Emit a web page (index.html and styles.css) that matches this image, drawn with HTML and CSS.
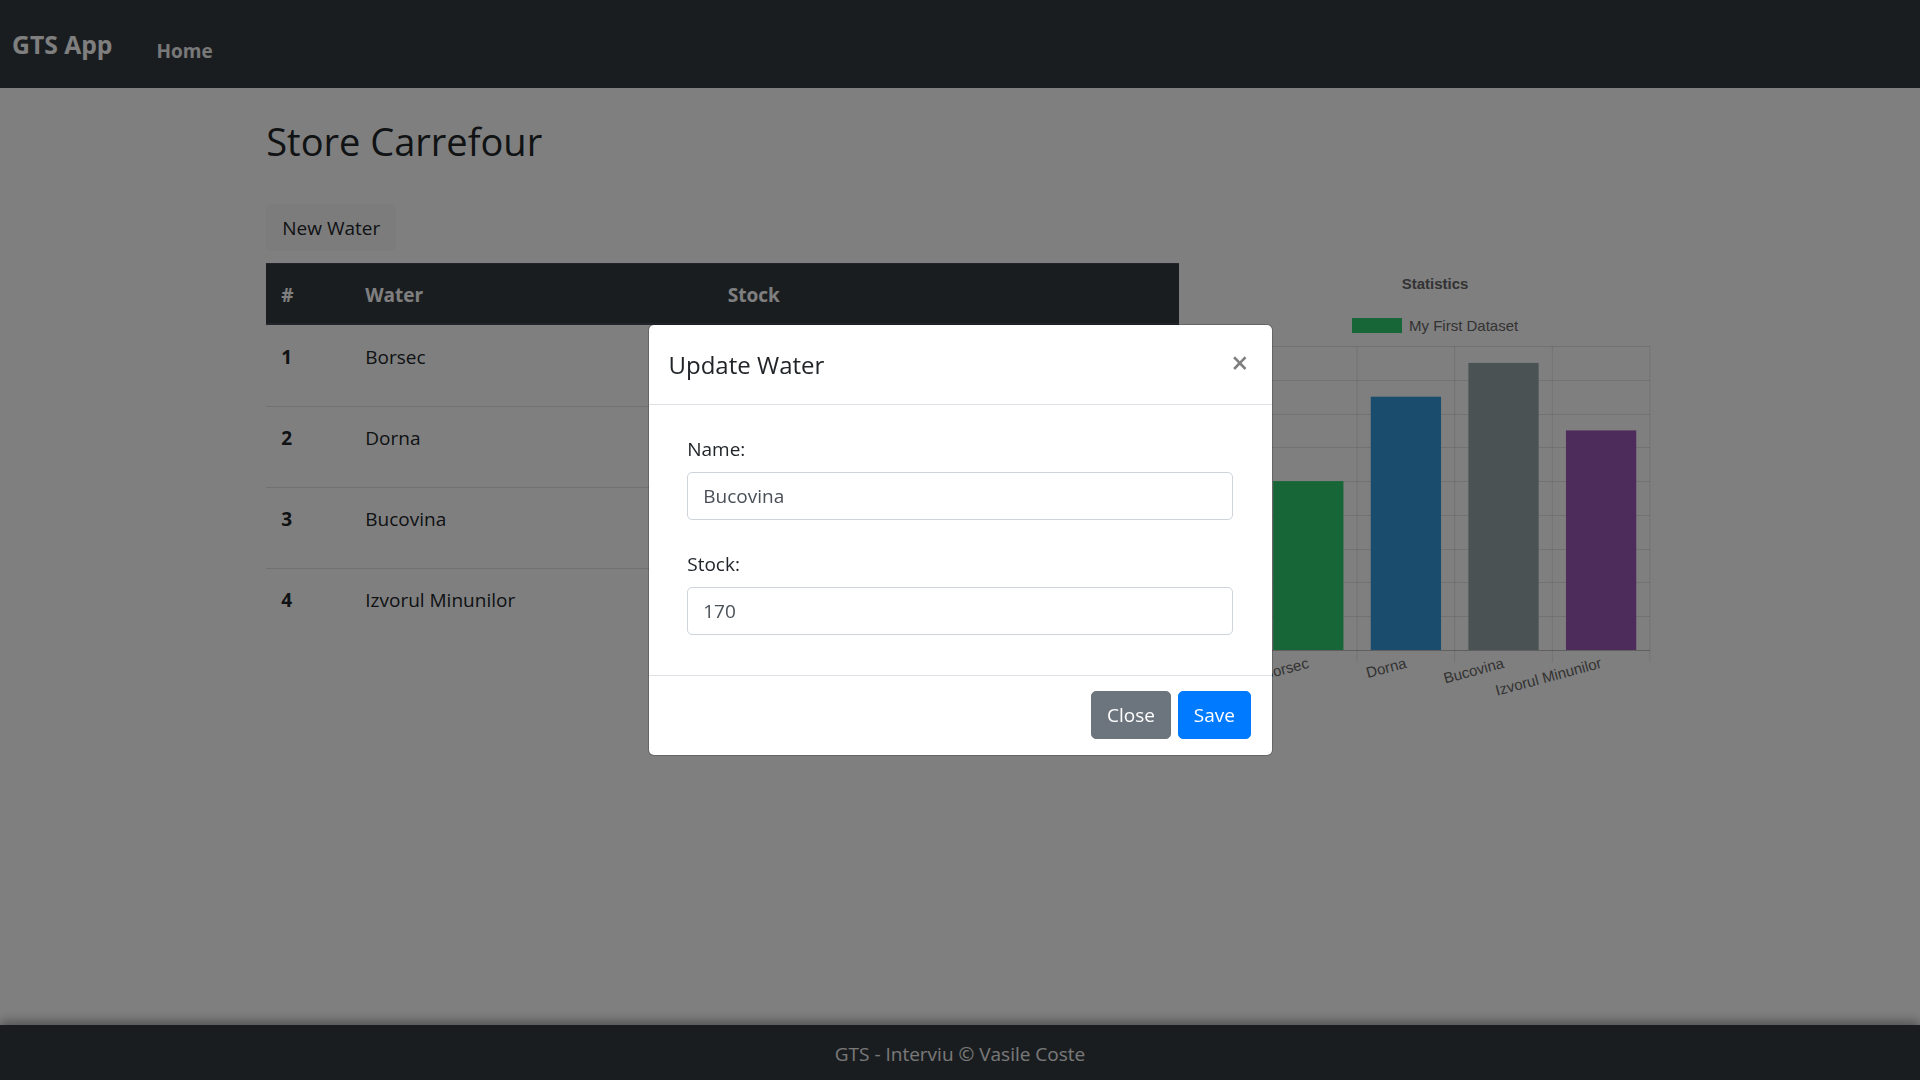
FILE: index.html
```html
<!DOCTYPE html>
<html lang="ro">
<head>
<meta charset="utf-8">
<title>GTS App</title>
<link rel="stylesheet" href="styles.css">
</head>
<body>
<div class="page">
  <nav class="navbar">
    <a class="brand" href="#">GTS App</a>
    <a class="nav-link" href="#">Home</a>
  </nav>

  <main class="container">
    <h2 class="title">Store Carrefour</h2>
    <div class="row">
      <div class="col-main">
        <button class="btn btn-light" type="button">New Water</button>
        <table class="table">
          <colgroup>
            <col class="c-num">
            <col class="c-name">
            <col class="c-stock">
          </colgroup>
          <thead>
            <tr><th>#</th><th>Water</th><th>Stock</th></tr>
          </thead>
          <tbody>
            <tr><th class="num">1</th><td>Borsec</td><td></td></tr>
            <tr><th class="num">2</th><td>Dorna</td><td></td></tr>
            <tr><th class="num">3</th><td>Bucovina</td><td></td></tr>
            <tr><th class="num">4</th><td>Izvorul Minunilor</td><td></td></tr>
          </tbody>
        </table>
      </div>
      <div class="col-chart">
        <svg class="chart" width="438" height="520" viewBox="0 0 438 520" xmlns="http://www.w3.org/2000/svg">
          <text class="chart-title" x="219" y="85" text-anchor="middle">Statistics</text>
          <rect x="136" y="114" width="50" height="15" fill="#2ecc71"/>
          <text class="chart-text" x="193" y="127">My First Dataset</text>

          <g class="grid">
            <line x1="31" y1="142.5" x2="434" y2="142.5"/>
            <line x1="31" y1="176.5" x2="434" y2="176.5"/>
            <line x1="31" y1="210.5" x2="434" y2="210.5"/>
            <line x1="31" y1="243.5" x2="434" y2="243.5"/>
            <line x1="31" y1="277.5" x2="434" y2="277.5"/>
            <line x1="31" y1="311.5" x2="434" y2="311.5"/>
            <line x1="31" y1="345.5" x2="434" y2="345.5"/>
            <line x1="31" y1="378.5" x2="434" y2="378.5"/>
            <line x1="31" y1="412.5" x2="434" y2="412.5"/>
            <line x1="141.1" y1="142" x2="141.1" y2="458.5"/>
            <line x1="238.7" y1="142" x2="238.7" y2="458.5"/>
            <line x1="336.3" y1="142" x2="336.3" y2="458.5"/>
            <line x1="433.9" y1="142" x2="433.9" y2="458.5"/>
          </g>
          <g class="axis">
            <line x1="43.5" y1="142" x2="43.5" y2="458.5"/>
            <line x1="31" y1="446.5" x2="434" y2="446.5"/>
          </g>

          <rect x="57.15" y="277.1" width="70.3" height="168.9" fill="#2ecc71"/>
          <rect x="154.75" y="192.7" width="70.3" height="253.3" fill="#3498db"/>
          <rect x="252.35" y="158.9" width="70.3" height="287.1" fill="#95a5a6"/>
          <rect x="349.95" y="226.4" width="70.3" height="219.6" fill="#9b59b6"/>

          <g class="chart-text" text-anchor="end">
            <text transform="translate(92.3 458.5) rotate(-15)" y="5.2">Borsec</text>
            <text transform="translate(189.9 458.5) rotate(-15)" y="5.2">Dorna</text>
            <text transform="translate(287.5 458.5) rotate(-15)" y="5.2">Bucovina</text>
            <text transform="translate(385.1 458.5) rotate(-15)" y="5.2">Izvorul Minunilor</text>
          </g>
        </svg>
      </div>
    </div>
  </main>

  <footer class="footer">GTS - Interviu © Vasile Coste</footer>
</div>

<div class="backdrop"></div>

<div class="modal-wrap">
  <div class="modal">
    <div class="modal-header">
      <h5 class="modal-title">Update Water</h5>
      <button class="close" type="button" aria-label="Close">×</button>
    </div>
    <div class="modal-body">
      <form class="form">
        <div class="form-group">
          <label for="name">Name:</label>
          <input class="form-control" id="name" type="text" value="Bucovina">
        </div>
        <div class="form-group">
          <label for="stock">Stock:</label>
          <input class="form-control" id="stock" type="text" value="170">
        </div>
      </form>
    </div>
    <div class="modal-footer">
      <button class="btn btn-secondary" type="button">Close</button>
      <button class="btn btn-primary" type="button">Save</button>
    </div>
  </div>
</div>
</body>
</html>
```

FILE: styles.css
```css
html, body {
  margin: 0;
  padding: 0;
}

body {
  font-family: "Open Sans", "Noto Sans", sans-serif;
  font-size: 19px;
  line-height: 30px;
  color: #212529;
  background: #fff;
}

.page {
  min-height: 100vh;
  display: flex;
  flex-direction: column;
}

/* Navbar */
.navbar {
  height: 88px;
  box-sizing: border-box;
  background: #343a40;
  display: flex;
  align-items: flex-start;
  padding-left: 12px;
}

.brand {
  font-size: 24.7px;
  line-height: 36px;
  font-weight: 700;
  color: #fff;
  text-decoration: none;
  margin-top: 27px;
}

.nav-link {
  font-size: 19px;
  line-height: 30px;
  font-weight: 700;
  color: #f0f0f0;
  text-decoration: none;
  margin-top: 36px;
  margin-left: 44px;
}

/* Main */
.container {
  flex: 1;
  width: 1425px;
  box-sizing: border-box;
  margin: 0 auto;
  padding: 29px 18.75px 0;
}

.title {
  margin: 0 0 39px;
  font-size: 38px;
  line-height: 48px;
  font-weight: 400;
}

.row {
  display: grid;
  grid-template-columns: 912.5px 437.5px;
  column-gap: 37.5px;
  align-items: start;
}

.col-main {
  display: flex;
  flex-direction: column;
  align-items: flex-start;
}

.btn {
  font-family: inherit;
  font-size: 19px;
  line-height: 30px;
  padding: 7.5px 15px;
  border: 1px solid transparent;
  border-radius: 5px;
  cursor: pointer;
}

.btn-light {
  background: #f8f9fa;
  border-color: #f8f9fa;
  color: #212529;
  margin-bottom: 11.5px;
}

.btn-secondary {
  background: #6c757d;
  border-color: #6c757d;
  color: #fff;
  padding: 8px 15px;
}

.btn-primary {
  background: #007bff;
  border-color: #007bff;
  color: #fff;
  padding: 8px 15px;
}

/* Table */
.table {
  width: 100%;
  table-layout: fixed;
  border-collapse: separate;
  border-spacing: 0;
}

.c-num { width: 84px; }
.c-name { width: 362.5px; }

.table th,
.table td {
  padding: 16px 15px 34px;
  text-align: left;
  vertical-align: top;
  border-top: 1px solid #dee2e6;
}

.table thead th {
  background: #343a40;
  color: #fff;
  font-weight: 700;
  border-top: 1px solid #454d55;
  border-bottom: 2px solid #454d55;
  padding: 16px 15px 13px;
}

.table tbody tr:first-child th,
.table tbody tr:first-child td {
  border-top-color: transparent;
}

.table .num {
  font-weight: 700;
}

/* Chart */
.chart {
  display: block;
}

.chart-title {
  font-family: "Liberation Sans", Arial, sans-serif;
  font-size: 15px;
  font-weight: 700;
  fill: #666;
}

.chart-text {
  font-family: "Liberation Sans", Arial, sans-serif;
  font-size: 15px;
  fill: #666;
}

.grid line {
  stroke: rgba(0, 0, 0, 0.1);
  stroke-width: 1;
}

.axis line {
  stroke: rgba(0, 0, 0, 0.25);
  stroke-width: 1;
}

/* Footer */
.footer {
  background: #343a40;
  color: #f0f0f0;
  text-align: center;
  font-size: 19px;
  line-height: 30px;
  padding: 14px 0 11px;
  box-shadow: 0 -4px 10px rgba(0, 0, 0, 0.35);
}

/* Backdrop + modal */
.backdrop {
  position: fixed;
  inset: 0;
  background: rgba(0, 0, 0, 0.5);
}

.modal-wrap {
  position: fixed;
  inset: 0;
  display: flex;
  align-items: center;
  justify-content: center;
}

.modal {
  width: 623px;
  background: #fff;
  background-clip: padding-box;
  border: 1px solid rgba(0, 0, 0, 0.2);
  border-radius: 6px;
}

.modal-header {
  display: flex;
  align-items: flex-start;
  padding: 21px 20px 20px;
  border-bottom: 1px solid #dee2e6;
}

.modal-title {
  margin: 0;
  font-size: 24px;
  line-height: 37.5px;
  font-weight: 400;
}

.close {
  font-family: inherit;
  font-size: 30px;
  font-weight: 600;
  line-height: 30px;
  color: #000;
  opacity: 0.5;
  background: none;
  border: 0;
  padding: 2px 0 0;
  margin: 0 3px 0 auto;
  cursor: pointer;
}

.modal-body {
  padding: 20px;
}

.form {
  padding: 0 18.75px;
  margin: 0;
}

.form-group {
  margin: 0 0 20px;
  padding-top: 9px;
}

.form-group label {
  display: block;
  margin: 0 0 8.5px;
}

.form-control {
  display: block;
  width: 100%;
  height: 47.5px;
  box-sizing: border-box;
  padding: 7.5px 15px;
  font-family: inherit;
  font-size: 19px;
  line-height: 30px;
  color: #495057;
  background: #fff;
  border: 1px solid #ced4da;
  border-radius: 5px;
}

.modal-footer {
  display: flex;
  justify-content: flex-end;
  gap: 7px;
  padding: 15px 20.5px 16px 15px;
  border-top: 1px solid #dee2e6;
}
```
